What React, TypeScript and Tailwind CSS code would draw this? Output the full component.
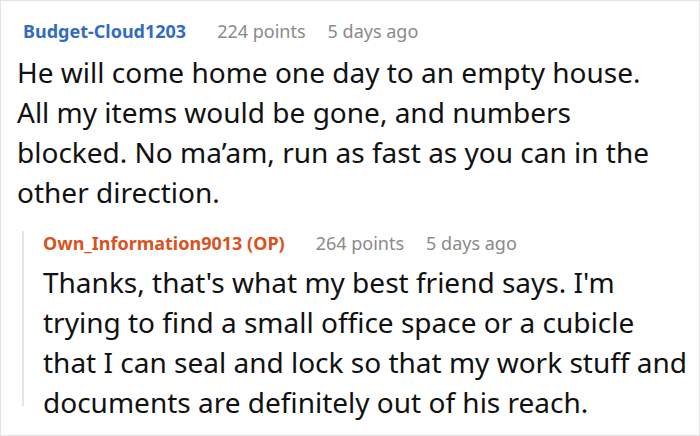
import React from 'react';

const font = { fontFamily: '"Noto Sans", "Open Sans", sans-serif' };

const Meta: React.FC<{ name: string; points: string; when: string; color: string }> = ({ name, points, when, color }) => (
    <div className="flex items-baseline gap-[31px] text-[18px] leading-[24px]">
        <span className={`font-bold ${color}`}>{name}</span>
        <span className="flex gap-[22px] text-[#8a8a8a]">
            <span>{points}</span>
            <span>{when}</span>
        </span>
    </div>
);

const App: React.FC = () => {
    return (
        <div className="w-[700px] h-[436px] overflow-hidden bg-white border border-[#e4e4e4]" style={font}>
            <div className="pl-[22px] pt-[18px]">
                <Meta name="Budget-Cloud1203" points="224 points" when="5 days ago" color="text-[#336bbf]" />
            </div>
            <p className="pl-[16px] mt-[9px] text-[28px] leading-[40px] text-[#111]">
                He will come home one day to an empty house.<br />
                All my items would be gone, and numbers<br />
                blocked. No ma’am, run as fast as you can in the<br />
                other direction.
            </p>
            <div className="ml-[21px] mt-[31px] h-[175px] border-l-2 border-[#e6e6e6] pl-[19px]">
                <div className="-mt-[12px]">
                    <Meta name="Own_Information9013 (OP)" points="264 points" when="5 days ago" color="text-[#d9531e]" />
                </div>
                <p className="mt-[7px] text-[28px] leading-[40px] text-[#111]">
                    Thanks, that's what my best friend says. I'm<br />
                    trying to find a small office space or a cubicle<br />
                    that I can seal and lock so that my work stuff and<br />
                    documents are definitely out of his reach.
                </p>
            </div>
        </div>
    );
};

export default App;
